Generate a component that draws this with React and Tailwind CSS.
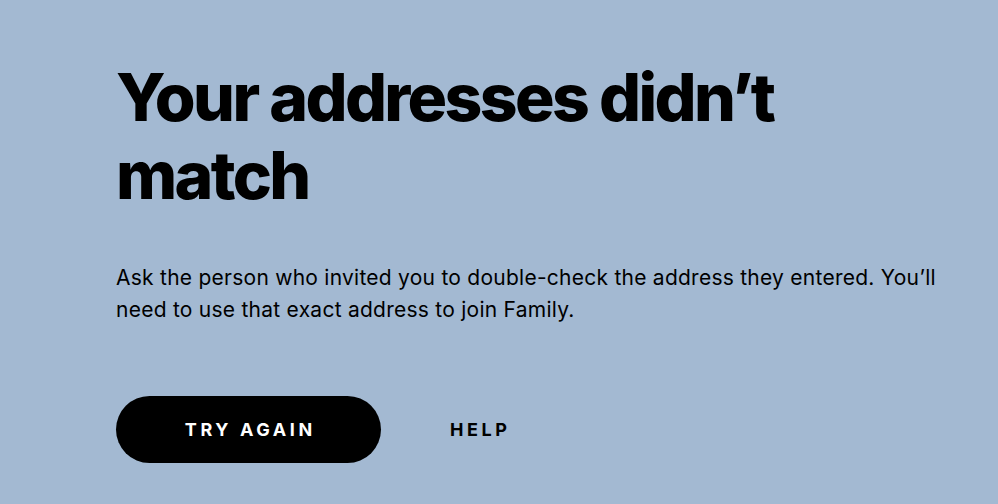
export default function App() {
  return (
    <div className="min-h-screen w-full bg-[#a3b9d2] text-black" style={{ fontFamily: 'Inter, "Liberation Sans", sans-serif' }}>
      <div className="pl-[116px] pt-[58px] pr-[40px]">
        <h1 className="text-[66px] font-extrabold leading-[78px] tracking-[-0.04em] max-w-[700px]">
          Your addresses didn’t match
        </h1>
        <p className="mt-[48px] text-[21px] leading-[32px] tracking-[0.012em] max-w-[840px]">
          Ask the person who invited you to double-check the address they entered. You’ll need to use that exact address to join Family.
        </p>
        <div className="mt-[70px] flex items-center">
          <button className="h-[67px] w-[265px] rounded-full bg-black text-white text-[18px] font-bold tracking-[0.2em] pl-[0.2em]">
            TRY AGAIN
          </button>
          <button className="ml-[69px] text-[18px] font-bold tracking-[0.2em]">
            HELP
          </button>
        </div>
      </div>
    </div>
  );
}
